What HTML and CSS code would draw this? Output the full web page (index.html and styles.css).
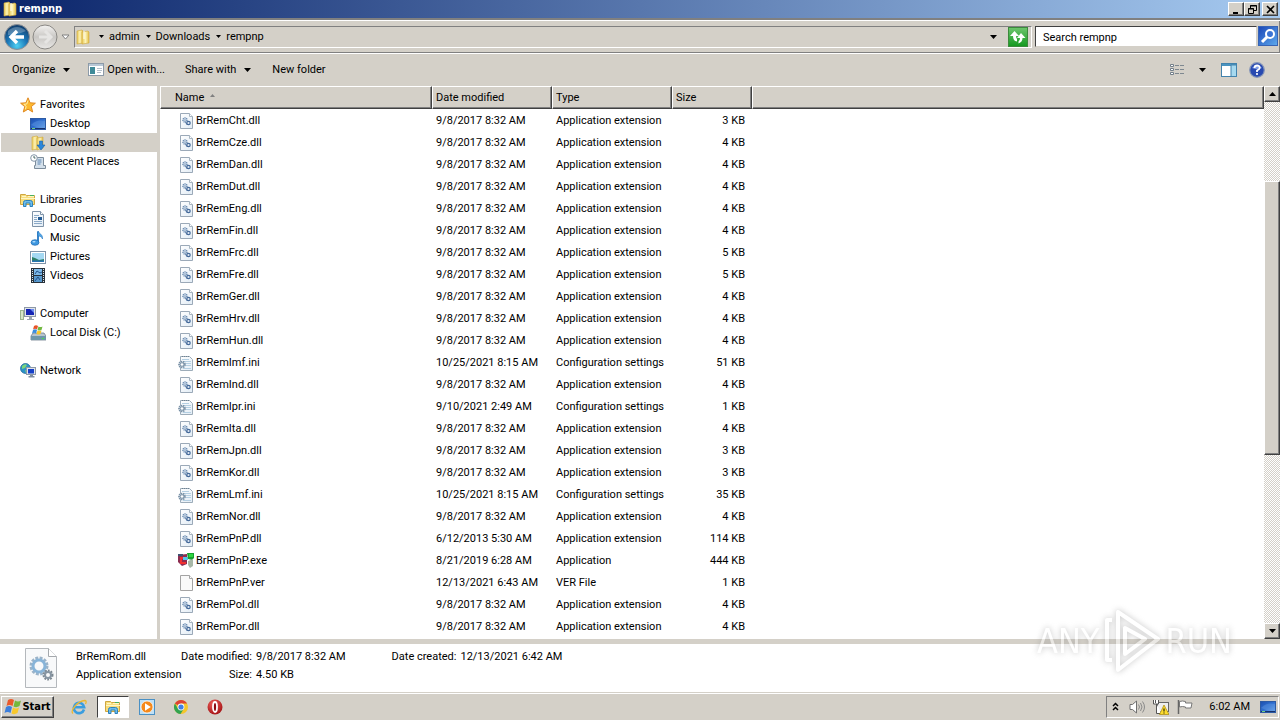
FILE: index.html
```html
<!DOCTYPE html>
<html lang="en">
<head>
    <meta charset="utf-8">
    <title>rempnp</title>
    <link rel="stylesheet" href="styles.css">
</head>
<body>

    <!-- Shared icons -->
    <svg class="sprite" aria-hidden="true">
        <defs>
            <linearGradient id="g-folder" x1="0" y1="0" x2="1" y2="0">
                <stop offset="0" stop-color="#e8c95a"/><stop offset=".5" stop-color="#fdf3b4"/><stop offset="1" stop-color="#e2bd48"/>
            </linearGradient>
            <linearGradient id="g-screen" x1="0" y1="0" x2="1" y2="1">
                <stop offset="0" stop-color="#1d4fae"/><stop offset=".5" stop-color="#2f6fd0"/><stop offset="1" stop-color="#7fb6ee"/>
            </linearGradient>
            <radialGradient id="g-back" cx=".5" cy=".85" r=".8">
                <stop offset="0" stop-color="#4fd0f2"/><stop offset=".5" stop-color="#1c78b8"/><stop offset="1" stop-color="#12406f"/>
            </radialGradient>
            <linearGradient id="g-fwd" x1="0" y1="0" x2="0" y2="1">
                <stop offset="0" stop-color="#f4f3f1"/><stop offset=".5" stop-color="#c9c7c4"/><stop offset="1" stop-color="#e9e8e6"/>
            </linearGradient>
            <linearGradient id="g-page" x1="0" y1="0" x2="1" y2="1">
                <stop offset="0" stop-color="#ffffff"/><stop offset="1" stop-color="#e2ecf5"/>
            </linearGradient>
            <radialGradient id="g-opera" cx=".4" cy=".3" r=".8">
                <stop offset="0" stop-color="#f0605a"/><stop offset="1" stop-color="#9c0a0e"/>
            </radialGradient>
        </defs>
        <symbol id="i-folder" viewBox="0 0 16 16">
            <path d="M2 2l5-1 1 1v12l-6 1z" fill="url(#g-folder)" stroke="#d0a93a" stroke-width=".6"/>
            <path d="M7 3l6-1 1 1v11l-7 1z" fill="url(#g-folder)" stroke="#d0a93a" stroke-width=".6"/>
            <path d="M9 2v8" stroke="#fff" stroke-width="1"/>
        </symbol>
        <symbol id="i-star" viewBox="0 0 16 16">
            <path d="M8 .8l2.100 5 5.300.4-4.100 3.400 1.400 5.400L8 12.200l-4.700 2.800 1.400-5.400L.6 6.200l5.300-.4z" fill="#fdb92e" stroke="#e08a24"/>
            <path d="M8 3.500L6.800 7l-3 .3 2.400 2 -.8 3" fill="none" stroke="#fff0a8"/>
        </symbol>
        <symbol id="i-desktop" viewBox="0 0 16 16">
            <rect x=".5" y="2.500" width="15" height="11" fill="url(#g-screen)" stroke="#2c5aa4"/>
            <path d="M1 12.500h14" stroke="#15306a"/><path d="M2 12.500h3" stroke="#6fd080"/>
            <path d="M1 9c5-5 9-5 14-4v7H9z" fill="#5d95e0" opacity=".5"/>
        </symbol>
        <symbol id="i-downloads" viewBox="0 0 16 16">
            <path d="M2 2l5-1 1 1v12l-6 1z" fill="url(#g-folder)" stroke="#d0a93a" stroke-width=".6"/>
            <path d="M7 3l6-1v11l-6 2z" fill="url(#g-folder)" stroke="#d0a93a" stroke-width=".6"/>
            <path d="M9.500 6h3v4H15l-4 5-4-5h2.500z" fill="#2a86dc" stroke="#1660a8" stroke-width=".6"/>
        </symbol>
        <symbol id="i-recent" viewBox="0 0 16 16">
            <path d="M5.500 3.500h8v8h2v3h-11v-3h1z" fill="#d3dfea" stroke="#7c8c9b"/>
            <path d="M7.500 6h4M7.500 8h4M7.500 10h3" stroke="#5c86b4"/>
            <circle cx="4" cy="4" r="3.300" fill="#fff" stroke="#8496a8"/><path d="M4 2v2h1.500" fill="none" stroke="#466"/>
        </symbol>
        <symbol id="i-libraries" viewBox="0 0 16 16">
            <path d="M.5 2.500h5l1 1h8v9H.5z" fill="#f7dd7c" stroke="#cfa640"/>
            <path d="M1 6.500h14M2 4.500h4M8 4.500h6" stroke="#fff6c4"/><path d="M10 3.500h4" stroke="#4ab05c"/>
            <path d="M3.500 14.500v-4q0-2 2-2h5q2 0 2 2v4h-2.500v-3.500h-4v3.500z" fill="#6dbbea" stroke="#2b82bd"/>
        </symbol>
        <symbol id="i-document" viewBox="0 0 16 16">
            <path d="M2.500.5h8l3 3v12h-11z" fill="url(#g-page)" stroke="#7f93a8"/><path d="M10.500.5v3h3" fill="#fff" stroke="#7f93a8"/>
            <path d="M4 4.500h5M4 6.500h3M4 8.500h3M4 10.500h8M4 12.500h8" stroke="#8aa9c8"/><rect x="8" y="6" width="4" height="3" fill="#245b94"/>
        </symbol>
        <symbol id="i-music" viewBox="0 0 16 16">
            <path d="M8 1.500v11" stroke="#2276c2" stroke-width="1.800"/>
            <path d="M8 1c1 3 5 3 4.500 8-.8-2-2-3-4.500-3z" fill="#55a8e6" stroke="#2276c2" stroke-width=".6"/>
            <ellipse cx="5" cy="12.500" rx="4" ry="2.800" fill="#3f98e0" stroke="#1d68b0" stroke-width=".7"/>
            <ellipse cx="4" cy="11.700" rx="1.600" ry=".8" fill="#b9e2ff"/>
        </symbol>
        <symbol id="i-picture" viewBox="0 0 16 16">
            <rect x=".5" y="2.500" width="15" height="12" fill="#fff" stroke="#8093a8"/><rect x="2" y="4" width="12" height="9" fill="#a4d8f2"/>
            <path d="M2 8l3 1 4 2 5-1v3H2z" fill="#2d8068"/><path d="M2 11.500h12V13H2z" fill="#2675b4"/>
        </symbol>
        <symbol id="i-video" viewBox="0 0 16 16">
            <rect x="1" y="0" width="14" height="15" fill="#27313a"/>
            <rect x="4" y="1" width="8" height="6" fill="#7db9e8"/><rect x="4" y="8" width="8" height="6" fill="#5798cd"/>
            <path d="M5 6l2-3 3 2 2-1M5 13l3-4 2 3" stroke="#23528a" fill="none"/>
            <path d="M2.500 1v14M13.500 1v14" stroke="#dde6ee" stroke-width="1" stroke-dasharray="1 1"/>
        </symbol>
        <symbol id="i-computer" viewBox="0 0 16 16">
            <rect x=".5" y="4.500" width="3" height="9" fill="#d7e6c8" stroke="#9cb490"/>
            <rect x="4.500" y="1.500" width="11" height="9" fill="#dfe4ea" stroke="#8d98a6"/><rect x="6" y="3" width="8" height="6" fill="#1424b4"/>
            <path d="M10 3h4v4z" fill="#6c8cf0"/><path d="M9 11h3v2h2v1H7v-1h2z" fill="#9aa5b2"/>
        </symbol>
        <symbol id="i-disk" viewBox="0 0 16 16">
            <path d="M3 8h11l2 3v4H1v-4z" fill="#b8c4cf" stroke="#6f7f8e" stroke-width=".8"/><path d="M1 11h15v4H1z" fill="#6f97aa"/><path d="M12 13.500h2" stroke="#44e050"/>
            <path d="M4 1q2-1.500 4 0L7 4.500q-2-1.500-4 0z" fill="#e85328"/><path d="M8.500 1.500q2 1 4 0l-1 3.500q-2 1-4 0z" fill="#72b840"/>
            <path d="M3 5q2-1.500 4 0L6 8.500q-2-1.500-4 0z" fill="#3a8ede"/><path d="M7.500 5.500q2 1 4 0l-1 3.500q-2 1-4 0z" fill="#f6c62c"/>
        </symbol>
        <symbol id="i-network" viewBox="0 0 16 16">
            <circle cx="5.500" cy="5.500" r="5" fill="#2c92c8" stroke="#1a6090" stroke-width=".7"/>
            <path d="M2 3q3-3 5-1L5 5l-3 1zM5 7l3 1-2 2z" fill="#7ad47c"/>
            <rect x="6.500" y="4.500" width="9" height="7" fill="#dfe4ea" stroke="#8d98a6"/><rect x="8" y="6" width="6" height="4.500" fill="#1640c8"/>
            <path d="M10 12h3v1h1.500v1.500h-6V13H10z" fill="#7f8ea0"/>
        </symbol>
        <symbol id="i-dll" viewBox="0 0 16 16">
            <path d="M2.500.5h9l3 3v12h-12z" fill="url(#g-page)" stroke="#9ba9b8"/><path d="M11.500.5v3h3" fill="#fff" stroke="#a7b4c0"/>
            <circle cx="7" cy="7" r="2" fill="#dfeaf5" stroke="#6486ad" stroke-width="1.500" stroke-dasharray="1 .6"/><circle cx="7" cy="7" r=".7" fill="#6486ad"/>
            <circle cx="10.500" cy="10" r="1.700" fill="#dfeaf5" stroke="#44699a" stroke-width="1.200"/><path d="M7.500 9.500l2 2.500" stroke="#44699a"/>
        </symbol>
        <symbol id="i-ini" viewBox="0 0 16 16">
            <path d="M2.500 1.500h9l3 3v11h-12z" fill="url(#g-page)" stroke="#9dacb9"/><path d="M4 1.500h7" stroke="#6f8190" stroke-dasharray="1 1"/>
            <path d="M4 4.500h7M6 6.500h7M8 8.500h5M8 10.500h5M5 13.500h8" stroke="#b4cfe2"/>
            <circle cx="4" cy="9.500" r="3" fill="#dfe8ef" stroke="#7890a6" stroke-width="1.700" stroke-dasharray="1.400 .7"/><circle cx="4" cy="9.500" r="1.800" fill="#fff" stroke="#7890a6"/>
        </symbol>
        <symbol id="i-exe" viewBox="0 0 16 16">
            <path d="M0 2l9-1v10l-5 2-4-4z" fill="#8c2c50"/><path d="M2 4h5v2H4v3h4v2H2z" fill="#f03030"/>
            <path d="M5 4h5v3H5z" fill="#58c4ec"/><path d="M9 0h7v5l-2 2-4-1z" fill="#18a030"/><path d="M11 1h4v3h-4z" fill="#2ed840"/>
            <path d="M10 8l5-2v7l-3 2-2-3z" fill="#a8b8a8"/><path d="M0 1h5v2H0z" fill="#405070"/>
        </symbol>
        <symbol id="i-blank" viewBox="0 0 16 16">
            <path d="M2.500.5h9l3 3v12h-12z" fill="#fafafa" stroke="#a4a4a4"/><path d="M11.500.5v3h3" fill="#fff" stroke="#a4a4a4"/>
        </symbol>
        <symbol id="i-caret" viewBox="0 0 7 4"><path d="M0 0h7L3.500 4z"/></symbol>
        <symbol id="i-flag" viewBox="0 0 18 17">
            <path d="M4 2q3-2 6 0L8.500 8q-3-2-6 0z" fill="#ea5a2c"/><path d="M11 2.500q3 2 6 0L15.500 8q-3 2-6 .5z" fill="#74b83c"/>
            <path d="M2 9q3-2 6 0l-1.500 6q-3-2-6 0z" fill="#3c7fdc"/><path d="M9 9.500q3 2 6 0L13.500 15q-3 2-6 .5z" fill="#f8c82c"/>
        </symbol>
    </svg>

    <header class="title-bar">
        <svg class="icon"><use href="#i-folder"/></svg>
        <h1>rempnp</h1>
        <button class="bevel" aria-label="Minimize"><svg width="9" height="9"><path d="M1 7h5v2H1z"/></svg></button>
        <button class="bevel" aria-label="Restore"><svg width="9" height="9" fill="none" stroke="#000"><path d="M2.500 3V.5h6v5H6M2 1h7M.5 3.500h5v5h-5zM0 4h6"/></svg></button>
        <button class="bevel close" aria-label="Close"><svg width="9" height="9"><path d="M1 1l7 7M8 1L1 8" stroke="#000" stroke-width="1.600"/></svg></button>
    </header>

    <nav class="nav-bar">
        <button class="round" aria-label="Back">
            <svg width="28" height="28"><circle cx="14" cy="14" r="12.500" fill="url(#g-back)" stroke="#8c8f94"/><path d="M5 8q9-8 18 0-9 4-18 4z" fill="#fff" opacity=".25"/><path d="M14 8l-6 6 6 6M9 14h12" fill="none" stroke="#fff" stroke-width="3.400"/></svg>
        </button>
        <button class="round" aria-label="Forward">
            <svg width="28" height="28"><circle cx="14" cy="14" r="12" fill="url(#g-fwd)" stroke="#8a8884"/><path d="M14 8l6 6-6 6M19 14H8" fill="none" stroke="#e6e5e3" stroke-width="3"/></svg>
        </button>
        <button class="history" aria-label="Recent pages"><svg width="9" height="6"><path d="M1 1h7L4.500 5z" fill="#fff" stroke="#808080"/></svg></button>
        <div class="address">
            <svg class="icon"><use href="#i-folder"/></svg>
            <svg class="crumb-arrow"><use href="#i-caret"/></svg>
            <a href="#">admin</a>
            <svg class="crumb-arrow"><use href="#i-caret"/></svg>
            <a href="#">Downloads</a>
            <svg class="crumb-arrow"><use href="#i-caret"/></svg>
            <a href="#">rempnp</a>
            <button class="previous" aria-label="Previous locations"><svg class="caret"><use href="#i-caret"/></svg></button>
            <button class="refresh" aria-label="Refresh"><svg width="18" height="18" fill="#fff"><path d="M5.500 3L1 8h3q0 5 4 5.500V11Q7 10 7 8h3zM12 5l4.500 5h-3q0 4-4 5.500v-2q1.500-1 1.500-3.500H8z"/></svg></button>
        </div>
        <form class="search">
            <input type="text" aria-label="Search" value="Search rempnp">
            <button type="button" aria-label="Search"><svg width="18" height="18" fill="none" stroke="#fff"><path d="M3 15l5-5" stroke-width="3"/><circle cx="11" cy="7" r="4" fill="#3c74d4" stroke-width="2"/></svg></button>
        </form>
    </nav>

    <div class="toolbar">
        <button class="organize">Organize <svg class="caret"><use href="#i-caret"/></svg></button>
        <button class="open-with"><svg class="icon" viewBox="0 0 16 16"><rect x=".5" y="1.500" width="15" height="12" fill="#fff" stroke="#8c9aa8"/><path d="M1 3h14" stroke="#b8c8d6" stroke-width="2"/><path d="M2 5h5v7H2z" fill="#3f8a98"/><path d="M9 6.500h5M9 8.500h5M9 10.500h4" stroke="#b4c0cc"/></svg>Open with...</button>
        <button class="share">Share with <svg class="caret"><use href="#i-caret"/></svg></button>
        <button>New folder</button>
        <div class="view-tools">
            <button aria-label="Change your view"><svg class="icon" viewBox="0 0 16 16"><g fill="#fff" stroke="#737f8a"><path d="M.5 2.500h3v2h-3zM.5 6.500h3v2h-3zM.5 10.500h3v2h-3z"/></g><path d="M5 3.500h10M5 7.500h10M5 11.500h10" stroke="#7e8890" stroke-dasharray="4 1"/></svg></button>
            <button class="view-more" aria-label="More options"><svg class="caret"><use href="#i-caret"/></svg></button>
            <button class="preview" aria-label="Preview pane"><svg class="icon" viewBox="0 0 16 16"><rect x=".5" y="1.500" width="15" height="13" fill="#fff" stroke="#4282ac"/><path d="M1 3h14" stroke="#4a94c0" stroke-width="2"/><path d="M10 3h5.500v11.500H10z" fill="#a6d9ef" stroke="#4282ac"/></svg></button>
            <button aria-label="Help"><svg class="icon" viewBox="0 0 16 16"><circle cx="8" cy="8" r="7.300" fill="#2849b0" stroke="#8595b8" stroke-width="1.200"/><path d="M3 6q5-6 10 0-5 2-10 0z" fill="#7e9ce6"/><path d="M5.500 6q0-2.500 2.600-2.500T10.700 6Q10.600 7.300 8 8.500V10" fill="none" stroke="#fff" stroke-width="1.800"/><circle cx="8" cy="12" r="1.100" fill="#fff"/></svg></button>
        </div>
    </div>

    <main>
        <aside class="sidebar">
            <ul>
                <li class="group"><a href="#"><svg class="icon"><use href="#i-star"/></svg>Favorites</a></li>
                <li><a href="#"><svg class="icon"><use href="#i-desktop"/></svg>Desktop</a></li>
                <li class="selected"><a href="#"><svg class="icon"><use href="#i-downloads"/></svg>Downloads</a></li>
                <li><a href="#"><svg class="icon"><use href="#i-recent"/></svg>Recent Places</a></li>
            </ul>
            <ul>
                <li class="group"><a href="#"><svg class="icon"><use href="#i-libraries"/></svg>Libraries</a></li>
                <li><a href="#"><svg class="icon"><use href="#i-document"/></svg>Documents</a></li>
                <li><a href="#"><svg class="icon"><use href="#i-music"/></svg>Music</a></li>
                <li><a href="#"><svg class="icon"><use href="#i-picture"/></svg>Pictures</a></li>
                <li><a href="#"><svg class="icon"><use href="#i-video"/></svg>Videos</a></li>
            </ul>
            <ul>
                <li class="group"><a href="#"><svg class="icon"><use href="#i-computer"/></svg>Computer</a></li>
                <li><a href="#"><svg class="icon"><use href="#i-disk"/></svg>Local Disk (C:)</a></li>
            </ul>
            <ul>
                <li class="group"><a href="#"><svg class="icon"><use href="#i-network"/></svg>Network</a></li>
            </ul>
        </aside>

        <div class="file-list">
            <table>
                <colgroup><col class="col-name"><col class="col-date"><col class="col-type"><col class="col-size"><col></colgroup>
                <thead>
                    <tr><th>Name <svg class="sort" width="5" height="3"><path d="M0 3h5L2.500 0z" fill="#808080"/></svg></th><th>Date modified</th><th>Type</th><th>Size</th><td></td></tr>
                </thead>
                <tbody>
                    <tr><td><svg class="icon"><use href="#i-dll"/></svg>BrRemCht.dll</td><td>9/8/2017 8:32 AM</td><td>Application extension</td><td>3 KB</td><td></td></tr>
                    <tr><td><svg class="icon"><use href="#i-dll"/></svg>BrRemCze.dll</td><td>9/8/2017 8:32 AM</td><td>Application extension</td><td>4 KB</td><td></td></tr>
                    <tr><td><svg class="icon"><use href="#i-dll"/></svg>BrRemDan.dll</td><td>9/8/2017 8:32 AM</td><td>Application extension</td><td>4 KB</td><td></td></tr>
                    <tr><td><svg class="icon"><use href="#i-dll"/></svg>BrRemDut.dll</td><td>9/8/2017 8:32 AM</td><td>Application extension</td><td>4 KB</td><td></td></tr>
                    <tr><td><svg class="icon"><use href="#i-dll"/></svg>BrRemEng.dll</td><td>9/8/2017 8:32 AM</td><td>Application extension</td><td>4 KB</td><td></td></tr>
                    <tr><td><svg class="icon"><use href="#i-dll"/></svg>BrRemFin.dll</td><td>9/8/2017 8:32 AM</td><td>Application extension</td><td>4 KB</td><td></td></tr>
                    <tr><td><svg class="icon"><use href="#i-dll"/></svg>BrRemFrc.dll</td><td>9/8/2017 8:32 AM</td><td>Application extension</td><td>5 KB</td><td></td></tr>
                    <tr><td><svg class="icon"><use href="#i-dll"/></svg>BrRemFre.dll</td><td>9/8/2017 8:32 AM</td><td>Application extension</td><td>5 KB</td><td></td></tr>
                    <tr><td><svg class="icon"><use href="#i-dll"/></svg>BrRemGer.dll</td><td>9/8/2017 8:32 AM</td><td>Application extension</td><td>4 KB</td><td></td></tr>
                    <tr><td><svg class="icon"><use href="#i-dll"/></svg>BrRemHrv.dll</td><td>9/8/2017 8:32 AM</td><td>Application extension</td><td>4 KB</td><td></td></tr>
                    <tr><td><svg class="icon"><use href="#i-dll"/></svg>BrRemHun.dll</td><td>9/8/2017 8:32 AM</td><td>Application extension</td><td>4 KB</td><td></td></tr>
                    <tr><td><svg class="icon"><use href="#i-ini"/></svg>BrRemImf.ini</td><td>10/25/2021 8:15 AM</td><td>Configuration settings</td><td>51 KB</td><td></td></tr>
                    <tr><td><svg class="icon"><use href="#i-dll"/></svg>BrRemInd.dll</td><td>9/8/2017 8:32 AM</td><td>Application extension</td><td>4 KB</td><td></td></tr>
                    <tr><td><svg class="icon"><use href="#i-ini"/></svg>BrRemIpr.ini</td><td>9/10/2021 2:49 AM</td><td>Configuration settings</td><td>1 KB</td><td></td></tr>
                    <tr><td><svg class="icon"><use href="#i-dll"/></svg>BrRemIta.dll</td><td>9/8/2017 8:32 AM</td><td>Application extension</td><td>4 KB</td><td></td></tr>
                    <tr><td><svg class="icon"><use href="#i-dll"/></svg>BrRemJpn.dll</td><td>9/8/2017 8:32 AM</td><td>Application extension</td><td>3 KB</td><td></td></tr>
                    <tr><td><svg class="icon"><use href="#i-dll"/></svg>BrRemKor.dll</td><td>9/8/2017 8:32 AM</td><td>Application extension</td><td>3 KB</td><td></td></tr>
                    <tr><td><svg class="icon"><use href="#i-ini"/></svg>BrRemLmf.ini</td><td>10/25/2021 8:15 AM</td><td>Configuration settings</td><td>35 KB</td><td></td></tr>
                    <tr><td><svg class="icon"><use href="#i-dll"/></svg>BrRemNor.dll</td><td>9/8/2017 8:32 AM</td><td>Application extension</td><td>4 KB</td><td></td></tr>
                    <tr><td><svg class="icon"><use href="#i-dll"/></svg>BrRemPnP.dll</td><td>6/12/2013 5:30 AM</td><td>Application extension</td><td>114 KB</td><td></td></tr>
                    <tr><td><svg class="icon"><use href="#i-exe"/></svg>BrRemPnP.exe</td><td>8/21/2019 6:28 AM</td><td>Application</td><td>444 KB</td><td></td></tr>
                    <tr><td><svg class="icon"><use href="#i-blank"/></svg>BrRemPnP.ver</td><td>12/13/2021 6:43 AM</td><td>VER File</td><td>1 KB</td><td></td></tr>
                    <tr><td><svg class="icon"><use href="#i-dll"/></svg>BrRemPol.dll</td><td>9/8/2017 8:32 AM</td><td>Application extension</td><td>4 KB</td><td></td></tr>
                    <tr><td><svg class="icon"><use href="#i-dll"/></svg>BrRemPor.dll</td><td>9/8/2017 8:32 AM</td><td>Application extension</td><td>4 KB</td><td></td></tr>
                </tbody>
            </table>
        </div>

        <div class="scrollbar">
            <button class="bevel" aria-label="Scroll up"><svg width="7" height="4"><path d="M0 4h7L3.500 0z"/></svg></button>
            <div class="track"><div class="thumb bevel"></div></div>
            <button class="bevel" aria-label="Scroll down"><svg width="7" height="4"><path d="M0 0h7L3.500 4z"/></svg></button>
        </div>
    </main>

    <section class="details">
        <svg class="details-icon" viewBox="0 0 32 40">
            <path d="M.5.5h23l8 8v31H.5z" fill="#f8f9fa" stroke="#b4b8bc"/><path d="M23.500.5v8h8" fill="#fff" stroke="#a4a8ac"/>
            <circle cx="14" cy="18" r="7" fill="none" stroke="#9bb3c8" stroke-width="5" stroke-dasharray="2.500 1.200"/><circle cx="14" cy="18" r="6" fill="#f8f9fa" stroke="#88b4d8" stroke-width="3"/>
            <circle cx="23" cy="27" r="4" fill="none" stroke="#7b8790" stroke-width="3" stroke-dasharray="1.600 1"/><circle cx="23" cy="27" r="3" fill="#f8f9fa" stroke="#8795a2" stroke-width="2"/>
        </svg>
        <div class="details-name">
            <div>BrRemRom.dll</div>
            <div>Application extension</div>
        </div>
        <dl class="details-first">
            <dt>Date modified:</dt><dd>9/8/2017 8:32 AM</dd>
            <dt>Size:</dt><dd>4.50 KB</dd>
        </dl>
        <dl>
            <dt>Date created:</dt><dd>12/13/2021 6:42 AM</dd>
        </dl>
    </section>

    <footer class="taskbar">
        <button class="start bevel"><svg width="18" height="17"><use href="#i-flag"/></svg>Start</button>
        <div class="launchers">
            <button aria-label="Internet Explorer"><svg class="icon" viewBox="0 0 16 16"><path d="M13 10.500A5.200 5.200 0 1 1 13.200 8.300H4" fill="none" stroke="#3a9ddf" stroke-width="2.600"/><path d="M2 14.500C-1 12 6 2 14 1.500q2 .5.500 3.500" fill="none" stroke="#ecb832" stroke-width="1.300"/></svg></button>
            <button class="active" aria-label="Windows Explorer"><svg class="icon"><use href="#i-libraries"/></svg></button>
            <button aria-label="Media Player"><svg class="icon" viewBox="0 0 16 16"><rect x=".5" y=".5" width="15" height="15" fill="#bfe0f6" stroke="#4a90c4"/><circle cx="8" cy="8" r="6" fill="#f5891c" stroke="#fff" stroke-width=".7"/><path d="M6 4.300v7.400L11.800 8z" fill="#fff"/></svg></button>
            <button aria-label="Chrome"><svg class="icon" viewBox="0 0 16 16"><circle cx="8" cy="8" r="7" fill="#f4c62c"/><path d="M8 8L1.900 4.500A7 7 0 0 1 14.100 4.500H8z" fill="#dc4236"/><path d="M1.900 4.500A7 7 0 0 0 7.500 15L11 9.500 5 9.700z" fill="#32a350"/><circle cx="8" cy="8" r="3.400" fill="#fff"/><circle cx="8" cy="8" r="2.600" fill="#3f7fe6"/></svg></button>
            <button aria-label="Opera"><svg class="icon" viewBox="0 0 16 16"><circle cx="8" cy="8" r="7.500" fill="url(#g-opera)"/><ellipse cx="8" cy="8" rx="2" ry="5" fill="#8c0a10" stroke="#fff" stroke-width="1.800"/></svg></button>
        </div>
        <div class="tray">
            <button class="chevrons" aria-label="Show hidden icons"><svg width="7" height="9" fill="none" stroke="#000" stroke-width="1.500"><path d="M1 4l2.500-2.500L6 4M1 8l2.500-2.500L6 8"/></svg></button>
            <svg class="icon" viewBox="0 0 16 16"><path d="M1 5.500h2.500L7.500 2v12l-4-3.500H1z" fill="#fff" stroke="#707070"/><path d="M9.500 5.500q2 2.500 0 5M11.500 4q3 4 0 8M13.500 2.500q4 5.500 0 11" fill="none" stroke="#8a8a8a"/></svg>
            <svg class="icon" viewBox="0 0 16 16"><rect x="4.500" y="3.500" width="11" height="9" fill="#eee" stroke="#666"/><path d="M.5 1v4h5V1M2.500 1v3M3.500 5v9.500h5" fill="#fff" stroke="#555"/><path d="M11 6l5 9.500H6.500z" fill="#fddc2c" stroke="#a8870c" stroke-width=".7"/><path d="M11 9.500v3M11 13.500v1" stroke="#000"/></svg>
            <svg class="icon" viewBox="0 0 16 16"><path d="M1.500 1v14" stroke="#666" stroke-width="1.500"/><path d="M2.500 2.500q3-1 6 0v1.500h6.500l-1 5H8.500V8q-3-1-6 0z" fill="#fff" stroke="#777"/></svg>
            <time>6:02 AM</time>
            <button aria-label="Show desktop"><svg class="icon"><use href="#i-desktop"/></svg></button>
        </div>
    </footer>

    <div class="watermark">
        <span>ANY</span>
        <svg width="60" height="66" fill="none" stroke="#fff" stroke-width="4" stroke-linejoin="round"><path d="M10 12H5v40h5M16 4v58l40-31zM23 20v26l20-15z"/></svg>
        <span>RUN</span>
    </div>

</body>
</html>
```
FILE: styles.css
```css
* {
    box-sizing: border-box;
}

body {
    display: flex;
    flex-direction: column;
    height: 100vh;
    margin: 0;
    overflow: hidden;
    background-color: #d4d0c8;
    color: #000;
    font-family: Roboto, "Liberation Sans", sans-serif;
    font-size: 11px;
    line-height: 14px;
}

button,
input {
    font: inherit;
    color: inherit;
}

button {
    display: flex;
    align-items: center;
    justify-content: center;
    padding: 0;
    border: none;
    background: none;
}

a {
    color: inherit;
    text-decoration: none;
}

svg {
    display: block;
    flex: none;
}

.sprite {
    position: absolute;
    width: 0;
    height: 0;
}

.icon {
    width: 16px;
    height: 16px;
}

.caret {
    width: 7px;
    height: 4px;
}

/* Raised classic edge */
.bevel {
    background-color: #d4d0c8;
    border: 1px solid;
    border-color: #fff #404040 #404040 #fff;
    box-shadow: inset -1px -1px #808080;
}

/** Title bar **/

.title-bar {
    display: flex;
    align-items: center;
    flex: none;
    height: 18px;
    padding: 0 2px;
    background: linear-gradient(to right, #0a246a, #a6caf0);
}

.title-bar h1 {
    flex: 1;
    margin: 0 0 0 1px;
    color: #fff;
    font-family: "DejaVu Sans Condensed", "DejaVu Sans", sans-serif;
    font-size: 11px;
    font-weight: bold;
}

.title-bar button {
    width: 16px;
    height: 14px;
}

.title-bar .close {
    margin-left: 2px;
}

/** Navigation bar **/

.nav-bar {
    display: flex;
    align-items: center;
    flex: none;
    height: 36px;
    padding: 0 2px 0 3px;
    border-top: 2px solid #808080;
    border-bottom: 1px solid #fff;
    box-shadow: inset 0 1px #fff, inset 0 -1px #808080, inset -1px 0 #808080;
}

.round {
    width: 28px;
}

.history {
    width: 12px;
    margin-right: 3px;
}

.address {
    display: flex;
    align-items: center;
    flex: 1;
    height: 22px;
    border: 1px solid;
    border-color: #808080 #fff #fff #808080;
}

.crumb-arrow {
    width: 5px;
    height: 3px;
    margin: 0 5px 0 6px;
}

.address .icon + .crumb-arrow {
    margin-left: 8px;
}

.previous {
    width: 21px;
    height: 18px;
    margin-left: auto;
}

.refresh {
    width: 20px;
    height: 20px;
    margin: 0 3px 0 4px;
    border: 1px solid #3c8a3c;
    background: linear-gradient(#6cc46c, #159a20);
}

.search {
    display: flex;
    flex: 0 0 243px;
    gap: 1px;
    margin-left: 3px;
}

.search input {
    flex: 1;
    min-width: 0;
    height: 21px;
    padding: 1px 7px 0;
    border: 1px solid;
    border-color: #404040 #d4d0c8 #d4d0c8 #404040;
    border-radius: 0;
    background-color: #fff;
}

.search button {
    width: 20px;
    height: 20px;
    border: 1px solid #3864b4;
    background: linear-gradient(to bottom right, #1c48b8, #5ca8ec);
}

/** Command bar **/

.toolbar {
    display: flex;
    align-items: center;
    flex: none;
    height: 32px;
    padding: 0 15px 0 12px;
}

.organize,
.share {
    gap: 8px;
}

.organize {
    margin-right: 18px;
}

.open-with {
    gap: 3px;
    margin-right: 20px;
}

.share {
    margin-right: 21px;
}

.view-tools {
    display: flex;
    align-items: center;
    margin-left: auto;
}

.view-more {
    margin: 0 15px 0 13px;
}

.preview {
    margin-right: 12px;
}

/** Main area **/

main {
    display: flex;
    flex: 1;
    min-height: 0;
    background-color: #fff;
}

.sidebar {
    flex: 0 0 160px;
    padding-top: 9px;
    border-right: 3px solid #d4d0c8;
}

.sidebar ul {
    margin: 0 0 19px;
    padding: 0;
    list-style: none;
}

.sidebar li {
    margin-left: 1px;
    padding-left: 29px;
}

.sidebar .group {
    padding-left: 19px;
}

.sidebar a {
    display: flex;
    align-items: center;
    gap: 4px;
    height: 19px;
    line-height: 16px;
}

.sidebar .selected {
    background-color: #d4d0c8;
}

.file-list {
    flex: 1;
    min-width: 0;
    overflow: hidden;
}

table {
    width: 100%;
    table-layout: fixed;
    border-collapse: separate;
    border-spacing: 0;
}

.col-name {
    width: 272px;
}

.col-date,
.col-type {
    width: 120px;
}

.col-size {
    width: 80px;
}

thead th,
thead td {
    height: 23px;
    padding: 1px 3px 0;
    background-color: #d4d0c8;
    border: 1px solid;
    border-color: #fff #404040 #404040 #fff;
    box-shadow: inset -1px -1px #808080;
    font-weight: normal;
    text-align: left;
}

thead th:first-child {
    padding-left: 14px;
}

.sort {
    display: inline-block;
    margin-left: 3px;
    vertical-align: 4px;
}

tbody td {
    height: 22px;
    padding: 2px 4px 0;
    line-height: 16px;
    white-space: nowrap;
}

tbody td:first-child {
    padding-left: 18px;
}

tbody td:nth-child(4) {
    padding-right: 7px;
    text-align: right;
}

tbody .icon {
    display: inline-block;
    margin-right: 2px;
    vertical-align: top;
}

.scrollbar {
    display: flex;
    flex-direction: column;
    flex: 0 0 16px;
}

.scrollbar button {
    height: 16px;
}

.track {
    flex: 1;
    padding-top: 79px;
    background: repeating-conic-gradient(#d4d0c8 0 25%, #fff 0 50%) 0 0 / 2px 2px;
}

.thumb {
    height: 62%;
}

/** Details pane **/

.details {
    display: flex;
    flex: none;
    height: 53px;
    padding: 4px 24px 0;
    border-top: 5px solid #d4d0c8;
    background-color: #fff;
    line-height: 18px;
    white-space: nowrap;
}

.details-icon {
    width: 34px;
    height: 40px;
}

.details-name {
    width: 105px;
    margin-left: 18px;
}

.details dl {
    display: grid;
    grid-template-columns: auto auto;
    align-content: start;
    column-gap: 4px;
    margin: 0;
}

.details .details-first {
    margin-right: 46px;
}

.details dt {
    text-align: right;
}

.details dd {
    margin: 0;
}

/** Taskbar **/

.taskbar {
    display: flex;
    align-items: center;
    flex: none;
    height: 28px;
    padding: 0 1px;
    border-top: 1px solid #d4d0c8;
    box-shadow: inset 0 1px #fff;
}

.start {
    width: 53px;
    height: 22px;
    font-family: "DejaVu Sans Condensed", "DejaVu Sans", sans-serif;
    font-size: 11px;
    font-weight: bold;
}

.launchers {
    display: flex;
    gap: 2px;
    margin-left: 9px;
}

.launchers button {
    width: 32px;
    height: 22px;
}

.launchers .active {
    border: 1px solid;
    border-color: #404040 #fff #fff #404040;
    background-color: #fff;
}

.tray {
    display: flex;
    align-items: center;
    gap: 8px;
    height: 22px;
    margin-left: auto;
    padding: 0 2px 0 5px;
    border: 1px solid;
    border-color: #808080 #fff #fff #808080;
}

.chevrons {
    margin-right: 2px;
}

.tray time {
    margin: 0 2px 0 8px;
}

/* Translucent logo floating over the window */
.watermark {
    position: absolute;
    right: 48px;
    bottom: 46px;
    display: flex;
    align-items: center;
    gap: 3px;
    color: #fff;
    font-family: "Liberation Sans Narrow", "DejaVu Sans Condensed", sans-serif;
    font-size: 34px;
    line-height: 40px;
    opacity: 0.5;
    filter: drop-shadow(0 0 3px #888);
    pointer-events: none;
}
```
